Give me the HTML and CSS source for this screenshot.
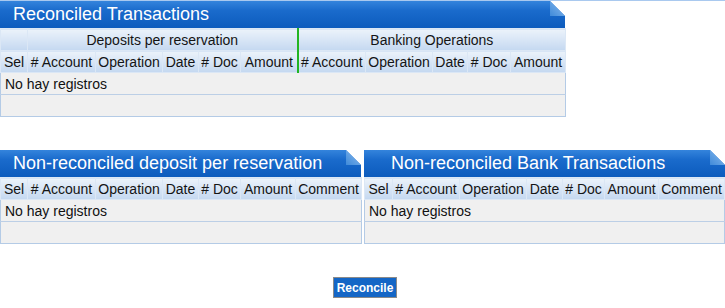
FILE: index.html
```html
<!DOCTYPE html>
<html lang="en">
<head>
  <meta charset="UTF-8" />
  <meta name="viewport" content="width=device-width, initial-scale=1.0"/>
  <title>Reconciliation</title>
  <link rel="stylesheet" href="styles.css">
</head>
<body>

<div class="page">
  <div class="panel panel-main">
    <div class="panel-title">
      Reconciled Transactions
      <svg class="fold" width="15" height="15" viewBox="0 0 15 15">
        <defs>
          <linearGradient id="foldA" x1="0" y1="1" x2="1" y2="0">
            <stop offset="0" stop-color="#3f8ad9"/>
            <stop offset="1" stop-color="#8dbdf0"/>
          </linearGradient>
        </defs>
        <polygon points="0,0 15,0 15,15" fill="#fff"/>
        <polygon points="0,0 15,15 0,15" fill="url(#foldA)"/>
      </svg>
    </div>
    <table class="grid">
      <colgroup>
        <col class="c-sel"><col class="c-acc"><col class="c-op"><col class="c-date"><col class="c-doc"><col class="c-amt-end">
        <col class="c-acc"><col class="c-op"><col class="c-date2"><col class="c-doc2"><col class="c-amt">
      </colgroup>
      <thead>
        <tr>
          <th></th>
          <th colspan="5" class="group-end">Deposits per reservation</th>
          <th colspan="5">Banking Operations</th>
        </tr>
        <tr>
          <th>Sel</th>
          <th># Account</th>
          <th>Operation</th>
          <th>Date</th>
          <th># Doc</th>
          <th class="group-end">Amount</th>
          <th># Account</th>
          <th>Operation</th>
          <th>Date</th>
          <th># Doc</th>
          <th>Amount</th>
        </tr>
      </thead>
      <tbody>
        <tr><td colspan="11">No hay registros</td></tr>
        <tr class="empty"><td colspan="11"></td></tr>
      </tbody>
    </table>
  </div>

  <div class="panel-row">
    <div class="panel panel-half">
      <div class="panel-title">
        Non-reconciled deposit per reservation
        <svg class="fold" width="15" height="15" viewBox="0 0 15 15">
          <defs>
            <linearGradient id="foldB" x1="0" y1="1" x2="1" y2="0">
              <stop offset="0" stop-color="#3f8ad9"/>
              <stop offset="1" stop-color="#8dbdf0"/>
            </linearGradient>
          </defs>
          <polygon points="0,0 15,0 15,15" fill="#fff"/>
          <polygon points="0,0 15,15 0,15" fill="url(#foldB)"/>
        </svg>
      </div>
      <table class="grid">
        <colgroup>
          <col class="c-sel"><col class="c-acc"><col class="c-op"><col class="c-date"><col class="c-doc"><col class="c-amt"><col class="c-com">
        </colgroup>
        <thead>
          <tr>
            <th>Sel</th>
            <th># Account</th>
            <th>Operation</th>
            <th>Date</th>
            <th># Doc</th>
            <th>Amount</th>
            <th>Comment</th>
          </tr>
        </thead>
        <tbody>
          <tr><td colspan="7">No hay registros</td></tr>
          <tr class="empty"><td colspan="7"></td></tr>
        </tbody>
      </table>
    </div>

    <div class="panel panel-half">
      <div class="panel-title title-wide">
        Non-reconciled Bank Transactions
        <svg class="fold" width="15" height="15" viewBox="0 0 15 15">
          <defs>
            <linearGradient id="foldC" x1="0" y1="1" x2="1" y2="0">
              <stop offset="0" stop-color="#3f8ad9"/>
              <stop offset="1" stop-color="#8dbdf0"/>
            </linearGradient>
          </defs>
          <polygon points="0,0 15,0 15,15" fill="#fff"/>
          <polygon points="0,0 15,15 0,15" fill="url(#foldC)"/>
        </svg>
      </div>
      <table class="grid">
        <colgroup>
          <col class="c-sel2"><col class="c-acc2"><col class="c-op"><col class="c-date"><col class="c-doc"><col class="c-amt2"><col class="c-com">
        </colgroup>
        <thead>
          <tr>
            <th>Sel</th>
            <th># Account</th>
            <th>Operation</th>
            <th>Date</th>
            <th># Doc</th>
            <th>Amount</th>
            <th>Comment</th>
          </tr>
        </thead>
        <tbody>
          <tr><td colspan="7">No hay registros</td></tr>
          <tr class="empty"><td colspan="7"></td></tr>
        </tbody>
      </table>
    </div>
  </div>

  <div class="actions">
    <button class="btn">Reconcile</button>
  </div>
</div>

</body>
</html>
```

FILE: styles.css
```css
html {
  overflow: hidden;
}
body {
  margin: 0;
  font-family: "Liberation Sans", Arial, sans-serif;
  background: #fff;
  color: #111;
  border-top: 1px solid #a9c9ef;
}
.page {
  width: 730px;
}
.panel {
  flex: none;
}
.panel-main {
  width: 565px;
}
.panel-half {
  width: 361px;
}
.panel-title {
  position: relative;
  height: 27px;
  line-height: 27px;
  padding-left: 13px;
  font-size: 18px;
  color: #fff;
  white-space: nowrap;
  background: linear-gradient(to bottom, #3484dc 0%, #1a6bcc 35%, #0c5bbd 100%);
}
.title-wide {
  padding-left: 27px;
}
.fold {
  position: absolute;
  top: 0;
  right: 0;
}
.grid {
  width: 100%;
  table-layout: fixed;
  border-collapse: collapse;
  font-size: 14px;
  white-space: nowrap;
  border: 1px solid #b4cbe6;
}
.c-sel { width: 27px; }
.c-sel2 { width: 28px; }
.c-acc { width: 68px; }
.c-acc2 { width: 67px; }
.c-op { width: 67px; }
.c-date { width: 36px; }
.c-date2 { width: 35px; }
.c-doc { width: 42px; }
.c-doc2 { width: 43px; }
.c-amt { width: 55px; }
.c-amt2 { width: 54px; }
.c-amt-end { width: 57px; }
.c-com { width: 66px; }
.grid th {
  height: 21px;
  padding: 0 2px;
  overflow: hidden;
  font-weight: normal;
  color: #141414;
  background: linear-gradient(to bottom, #ebf2fa 0%, #d6e4f5 55%, #c4d8f0 100%);
  border: 1px solid #dbe7f5;
}
.grid th.group-end {
  border-right: 2px solid #22b522;
}
.grid td {
  height: 21px;
  padding: 0 4px;
  text-align: left;
  background: #f0f0f0;
  border-top: 1px solid #bccfe6;
}
.panel-row {
  display: flex;
  gap: 3px;
  margin-top: 33px;
}
.actions {
  display: flex;
  justify-content: center;
  margin-top: 33px;
}
.btn {
  font-family: "Liberation Sans", Arial, sans-serif;
  font-size: 12px;
  font-weight: bold;
  color: #fff;
  background: #1466c6;
  border: 1px solid #8a8a8a;
  padding: 2px 3px;
  height: 21px;
  cursor: pointer;
}
```
